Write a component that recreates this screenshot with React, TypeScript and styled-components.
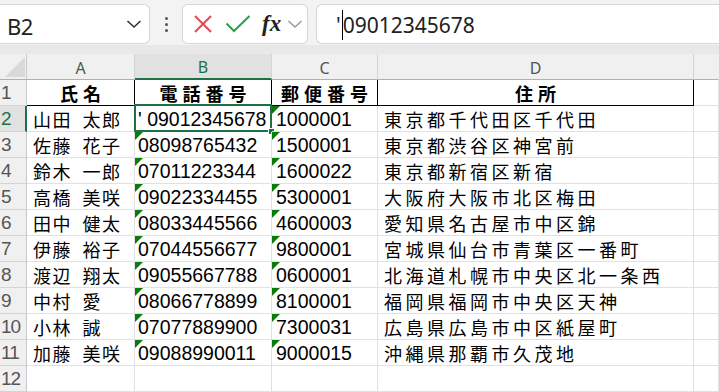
import React from "react";
import styled, { createGlobalStyle, css } from "styled-components";

const GlobalStyle = createGlobalStyle`
  html, body {
    margin: 0;
    padding: 0;
    background: #ffffff;
    overflow: hidden;
  }
`;

const GREEN = "#1e7145";
const GRID = "#e1e1e1";
const JP = `"Noto Sans CJK JP", "Noto Sans", sans-serif`;

interface Row {
  name: string;
  tel: string;
  zip: string;
  addr: string;
}

// U+2002 keeps the gap between family and given name close to the reference
const rows: Row[] = [
  { name: "山田\u2002太郎", tel: "' 09012345678", zip: "1000001", addr: "東京都千代田区千代田" },
  { name: "佐藤\u2002花子", tel: "08098765432", zip: "1500001", addr: "東京都渋谷区神宮前" },
  { name: "鈴木\u2002一郎", tel: "07011223344", zip: "1600022", addr: "東京都新宿区新宿" },
  { name: "高橋\u2002美咲", tel: "09022334455", zip: "5300001", addr: "大阪府大阪市北区梅田" },
  { name: "田中\u2002健太", tel: "08033445566", zip: "4600003", addr: "愛知県名古屋市中区錦" },
  { name: "伊藤\u2002裕子", tel: "07044556677", zip: "9800001", addr: "宮城県仙台市青葉区一番町" },
  { name: "渡辺\u2002翔太", tel: "09055667788", zip: "0600001", addr: "北海道札幌市中央区北一条西" },
  { name: "中村\u2002愛", tel: "08066778899", zip: "8100001", addr: "福岡県福岡市中央区天神" },
  { name: "小林\u2002誠", tel: "07077889900", zip: "7300031", addr: "広島県広島市中区紙屋町" },
  { name: "加藤\u2002美咲", tel: "09088990011", zip: "9000015", addr: "沖縄県那覇市久茂地" },
];

function App() {
  return (
    <>
      <GlobalStyle />
      <Page>
        <Toolbar>
          <NameBox>
            <NameText>B2</NameText>
            <svg width="16" height="10" viewBox="0 0 16 10">
              <path d="M1.5 2 L8 8 L14.5 2" fill="none" stroke="#333" strokeWidth="1.6" />
            </svg>
          </NameBox>
          <Dots>
            <Dot />
            <Dot />
            <Dot />
          </Dots>
          <FxBox>
            <svg width="20" height="20" viewBox="0 0 20 20">
              <path d="M2 2 L18 18 M18 2 L2 18" stroke="#e5484d" strokeWidth="2" fill="none" />
            </svg>
            <svg width="26" height="20" viewBox="0 0 26 20">
              <path d="M1.5 9.5 L9 17 L24.5 2" stroke="#2f9e52" strokeWidth="2" fill="none" />
            </svg>
            <FxLabel>fx</FxLabel>
            <svg width="16" height="10" viewBox="0 0 16 10">
              <path d="M1.5 2 L8 8 L14.5 2" fill="none" stroke="#9a9a9a" strokeWidth="1.5" />
            </svg>
          </FxBox>
          <FormulaInput>
            <FormulaText>
              '<Caret />09012345678
            </FormulaText>
          </FormulaInput>
        </Toolbar>

        <Sheet>
          <Corner />
          <ColHead>A</ColHead>
          <ColHead $active>B</ColHead>
          <ColHead>C</ColHead>
          <ColHead>D</ColHead>
          <ColHead $last />

          <RowHead>1</RowHead>
          <Cell $head $align="center" $spacing={5}>氏名</Cell>
          <Cell $head $align="center" $spacing={5}>電話番号</Cell>
          <Cell $head $align="center" $spacing={5}>郵便番号</Cell>
          <Cell $head $align="center" $spacing={5}>住所</Cell>
          <Cell />

          {rows.map((r, i) => {
            const n = i + 2;
            const selected = n === 2;
            return (
              <React.Fragment key={n}>
                <RowHead $active={selected}>{n}</RowHead>
                <Cell $pad={6} $spacing={1.5}>{r.name}</Cell>
                <Cell $pad={3} $num $flag={!selected}>
                  {r.tel}
                  {selected && (
                    <Selection>
                      <FillHandle />
                    </Selection>
                  )}
                </Cell>
                <Cell $pad={4} $num $flag>
                  {r.zip}
                </Cell>
                <Cell $pad={6} $spacing={3.5}>
                  {r.addr}
                </Cell>
                <Cell />
              </React.Fragment>
            );
          })}

          <RowHead>12</RowHead>
          <Cell />
          <Cell />
          <Cell />
          <Cell />
          <Cell />
        </Sheet>
      </Page>
    </>
  );
}

const Page = styled.div`
  width: 719px;
  height: 392px;
  overflow: hidden;
  display: flex;
  flex-direction: column;
  background: #fff;
`;

const Toolbar = styled.div`
  height: 54px;
  box-sizing: border-box;
  padding: 4px 0 10px;
  display: flex;
  align-items: stretch;
  background: linear-gradient(#f3f3f3 0 45px, #e8e8e8 45px);
  flex-shrink: 0;
`;

const Box = styled.div`
  background: #ffffff;
  border: 1px solid #d6d6d6;
  border-radius: 6px;
  box-sizing: border-box;
  display: flex;
  align-items: center;
`;

const NameBox = styled(Box)`
  width: 150px;
  border-left: none;
  border-radius: 0 6px 6px 0;
  padding: 0 7px 0 7px;
  justify-content: space-between;
`;

const NameText = styled.span`
  font-family: "Noto Sans", sans-serif;
  font-size: 22px;
  color: #222;
  margin-top: 3px;
  letter-spacing: -0.5px;
`;

const Dots = styled.div`
  width: 32px;
  display: flex;
  flex-direction: column;
  align-items: center;
  justify-content: center;
  gap: 3px;
`;

const Dot = styled.span`
  width: 3px;
  height: 3px;
  border-radius: 50%;
  background: #555;
`;

const FxBox = styled(Box)`
  width: 126px;
  padding: 0 0 0 10px;
  gap: 12px;
`;

const FxLabel = styled.span`
  font-family: "Liberation Serif", serif;
  font-style: italic;
  font-weight: bold;
  font-size: 23px;
  color: #222;
  margin-left: -1px;
  margin-right: -6px;
`;

const FormulaInput = styled(Box)`
  flex: 1;
  margin-left: 8px;
  border-right: none;
  border-radius: 6px 0 0 6px;
  padding-left: 19px;
`;

const FormulaText = styled.span`
  font-family: "Noto Sans", sans-serif;
  font-size: 21px;
  color: #222;
  display: flex;
  align-items: center;
  margin-top: 2px;
`;

const Caret = styled.span`
  display: inline-block;
  width: 1px;
  height: 30px;
  background: #000;
  margin: 0 0 0 1px;
`;

const Sheet = styled.div`
  display: grid;
  grid-template-columns: 27px 108px 137px 106px 316px 1fr;
  grid-auto-rows: 26px;
  font-family: ${JP};
`;

const Corner = styled.div`
  position: relative;
  background: #f0f0f0;
  border-right: 1px solid #c8c8c8;
  border-bottom: 1px solid #b0b0b0;
  box-sizing: border-box;

  &::after {
    content: "";
    position: absolute;
    right: 1px;
    bottom: 2px;
    border-left: 20px solid transparent;
    border-bottom: 20px solid #d9d9d9;
  }
`;

const ColHead = styled.div<{ $active?: boolean; $last?: boolean }>`
  box-sizing: border-box;
  display: flex;
  align-items: center;
  justify-content: center;
  padding-top: 2px;
  font-family: "Noto Sans", sans-serif;
  font-size: 16px;
  color: #555;
  background: #f0f0f0;
  border-right: 1px solid ${({ $last }) => ($last ? "#f0f0f0" : "#d4d4d4")};
  border-bottom: 1px solid #b0b0b0;

  ${({ $active }) =>
    $active &&
    css`
      background: #e1e1e1;
      color: ${GREEN};
      border-bottom: 2px solid ${GREEN};
    `}
`;

const RowHead = styled.div<{ $active?: boolean }>`
  box-sizing: border-box;
  display: flex;
  align-items: flex-end;
  padding: 0 0 0 1px;
  font-family: "Liberation Sans", sans-serif;
  font-size: 19px;
  line-height: 24px;
  color: #555;
  background: #f0f0f0;
  border-right: 1px solid #c8c8c8;
  border-bottom: 1px solid #d4d4d4;
  letter-spacing: -1px;
  overflow: hidden;

  ${({ $active }) =>
    $active &&
    css`
      color: ${GREEN};
      background: #e1e1e1;
      border-right: 2px solid ${GREEN};
    `}
`;

const Cell = styled.div<{
  $head?: boolean;
  $align?: "left" | "center";
  $spacing?: number;
  $pad?: number;
  $num?: boolean;
  $flag?: boolean;
}>`
  position: relative;
  box-sizing: border-box;
  display: flex;
  align-items: flex-end;
  justify-content: ${({ $align }) => ($align === "center" ? "center" : "flex-start")};
  padding-left: ${({ $pad, $spacing, $align }) =>
    $align === "center" ? `${$spacing ?? 0}px` : `${$pad ?? 0}px`};
  font-family: ${({ $num }) => ($num ? `"Liberation Sans", ${JP}` : JP)};
  font-size: ${({ $num }) => ($num ? "19.5px" : "18px")};
  line-height: 24px;
  color: #000;
  white-space: nowrap;
  letter-spacing: ${({ $spacing, $num }) => ($num ? "0px" : `${$spacing ?? 0}px`)};
  font-weight: ${({ $head }) => ($head ? 700 : 400)};
  border-right: 1px solid ${({ $head }) => ($head ? "#000" : GRID)};
  border-bottom: 1px solid ${({ $head }) => ($head ? "#000" : GRID)};

  ${({ $flag }) =>
    $flag &&
    css`
      &::before {
        content: "";
        position: absolute;
        top: 0;
        left: 0;
        border-top: 8px solid #0a7a0a;
        border-right: 8px solid transparent;
      }
    `}
`;

const Selection = styled.div`
  position: absolute;
  top: -2px;
  left: -1px;
  right: -1px;
  bottom: -1px;
  border: 2px solid ${GREEN};
  pointer-events: none;
`;

const FillHandle = styled.span`
  position: absolute;
  right: -5px;
  bottom: -5px;
  width: 5px;
  height: 5px;
  background: ${GREEN};
  border: 1px solid #fff;
`;

export default App;
